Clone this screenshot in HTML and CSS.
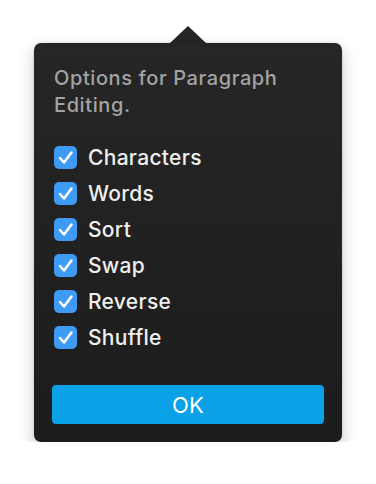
FILE: index.html
```html
<!DOCTYPE html>
<html>
<head>
    <meta charset='utf-8' />
    <title>Paragraph options</title>
    <link rel="stylesheet" href="styles.css">
</head>
<body>
    <div class='popover'>
        <div class='arrow'></div>
        <div class='panel'>
            <p class='title'>Options for Paragraph Editing.</p>
            <ul class='options'>
                <li><span class='check'><svg viewBox='0 0 23 23' width='23' height='23'><path d='M6 12 L10 16.5 L17.5 6.5' /></svg></span>Characters</li>
                <li><span class='check'><svg viewBox='0 0 23 23' width='23' height='23'><path d='M6 12 L10 16.5 L17.5 6.5' /></svg></span>Words</li>
                <li><span class='check'><svg viewBox='0 0 23 23' width='23' height='23'><path d='M6 12 L10 16.5 L17.5 6.5' /></svg></span>Sort</li>
                <li><span class='check'><svg viewBox='0 0 23 23' width='23' height='23'><path d='M6 12 L10 16.5 L17.5 6.5' /></svg></span>Swap</li>
                <li><span class='check'><svg viewBox='0 0 23 23' width='23' height='23'><path d='M6 12 L10 16.5 L17.5 6.5' /></svg></span>Reverse</li>
                <li><span class='check'><svg viewBox='0 0 23 23' width='23' height='23'><path d='M6 12 L10 16.5 L17.5 6.5' /></svg></span>Shuffle</li>
            </ul>
            <div class='ok-button'>OK</div>
        </div>
    </div>
</body>
</html>
```

FILE: styles.css
```css
body {
    margin: 0;
    background: #fff;
    font-family: 'Inter', 'Liberation Sans', sans-serif;
}

.popover {
    width: 308px;
    margin: 26px 0 0 34px;
    display: flex;
    flex-direction: column;
}

.arrow {
    width: 0;
    height: 0;
    margin-left: 136px;
    border-left: 18px solid transparent;
    border-right: 18px solid transparent;
    border-bottom: 17px solid #262626;
}

.panel {
    height: 399px;
    box-sizing: border-box;
    padding: 22px 18px 18px 20px;
    background: linear-gradient(#262626, #1c1c1c);
    border-radius: 7px;
    box-shadow: 0 6px 16px rgba(0, 0, 0, 0.22), 0 0 3px rgba(0, 0, 0, 0.12);
    display: flex;
    flex-direction: column;
}

.title {
    margin: 0;
    font-size: 20px;
    font-weight: 500;
    line-height: 27px;
    letter-spacing: 0.6px;
    color: #a3a3a3;
}

.options {
    list-style: none;
    margin: 27px 0 0 0;
    padding: 0;
    display: flex;
    flex-direction: column;
    gap: 13px;
}

.options li {
    display: flex;
    align-items: center;
    height: 23px;
    font-size: 21px;
    font-weight: 500;
    letter-spacing: 0.3px;
    color: #efefef;
}

.check {
    width: 23px;
    height: 23px;
    margin-right: 11px;
    border-radius: 5px;
    background: #3d9bf5;
    display: flex;
}

.check path {
    fill: none;
    stroke: #fff;
    stroke-width: 2.5;
    stroke-linecap: round;
    stroke-linejoin: round;
}

.ok-button {
    margin: auto 0 0 -2px;
    height: 39px;
    border-radius: 4px;
    background: #0aa1e6;
    color: #fff;
    font-size: 22px;
    letter-spacing: 0.3px;
    display: flex;
    align-items: center;
    justify-content: center;
}
```
